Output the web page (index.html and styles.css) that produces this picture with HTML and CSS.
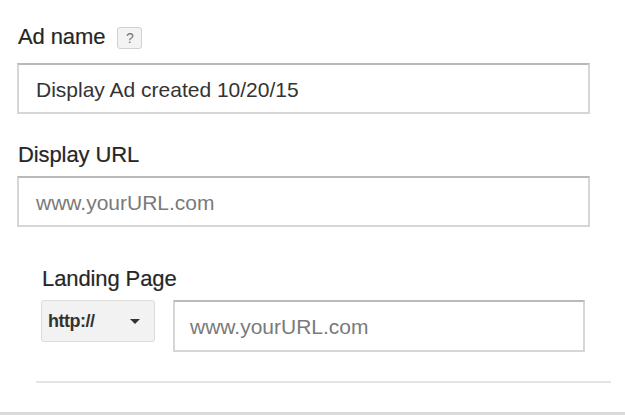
FILE: index.html
```html
<!DOCTYPE html>
<html>
<head>
<meta charset="utf-8">
<link rel="stylesheet" href="styles.css">
</head>
<body>
<div class="form">
  <div class="label-row">
    <span class="label">Ad name</span>
    <span class="help">?</span>
  </div>
  <div class="field field-main"><span class="value">Display Ad created 10/20/15</span></div>

  <div class="label-row label-display">
    <span class="label">Display URL</span>
  </div>
  <div class="field field-main"><span class="placeholder">www.yourURL.com</span></div>

  <div class="landing">
    <div class="label-row">
      <span class="label">Landing Page</span>
    </div>
    <div class="url-row">
      <div class="select">
        <span class="select-text">http://</span>
        <span class="caret"></span>
      </div>
      <div class="field field-url"><span class="placeholder">www.yourURL.com</span></div>
    </div>
  </div>
  <div class="separator"></div>
</div>
<div class="bottom-line"></div>
</body>
</html>
```

FILE: styles.css
```css
html, body {
  margin: 0;
  padding: 0;
  background: #ffffff;
}

body {
  font-family: "Liberation Sans", Arial, sans-serif;
  color: #333333;
  width: 625px;
  height: 415px;
  overflow: hidden;
  position: relative;
}

.form {
  padding: 24px 0 0 17px;
}

.label-row {
  display: flex;
  align-items: center;
  height: 26px;
  gap: 12px;
  padding-left: 1px;
}

.label {
  font-size: 22px;
  line-height: 26px;
  color: #262626;
  letter-spacing: -0.1px;
  -webkit-text-stroke: 0.2px #262626;
}

.help {
  width: 25px;
  height: 22px;
  box-sizing: border-box;
  border: 1px solid #d2d2d2;
  border-radius: 3px;
  background: #f3f3f3;
  color: #777777;
  font-size: 14px;
  line-height: 20px;
  text-align: center;
  margin-top: 1px;
}

.field {
  box-sizing: border-box;
  border: 2px solid #d6d6d6;
  border-top-color: #b9b9b9;
  background: #ffffff;
  display: flex;
  align-items: center;
  font-size: 21px;
}

.field-main {
  width: 573px;
  height: 51px;
  margin-top: 13px;
  padding: 3px 0 0 17px;
}

.value {
  color: #333333;
}

.placeholder {
  color: #7a7a7a;
}

.label-display {
  margin-top: 28px;
}

.label-display + .field-main {
  margin-top: 8px;
}

.landing {
  padding-left: 24px;
  margin-top: 39px;
}

.url-row {
  display: flex;
  align-items: flex-start;
  gap: 18px;
  margin-top: 8px;
}

.select {
  box-sizing: border-box;
  width: 114px;
  height: 42px;
  border: 1px solid #dcdcdc;
  border-radius: 3px;
  background: #f2f2f2;
  display: flex;
  align-items: center;
  justify-content: space-between;
  padding: 0 14px 0 6px;
}

.select-text {
  font-size: 18px;
  color: #333333;
  font-weight: bold;
  letter-spacing: -0.5px;
}

.caret {
  width: 0;
  height: 0;
  border-left: 5px solid transparent;
  border-right: 5px solid transparent;
  border-top: 5px solid #333333;
}

.field-url {
  width: 412px;
  height: 52px;
  padding: 2px 0 0 15px;
}

.separator {
  margin: 29px 0 0 19px;
  width: 575px;
  height: 2px;
  background: #e4e4e4;
}

.bottom-line {
  position: absolute;
  left: 0;
  bottom: 0;
  width: 625px;
  height: 3px;
  background: #dadada;
}
```
